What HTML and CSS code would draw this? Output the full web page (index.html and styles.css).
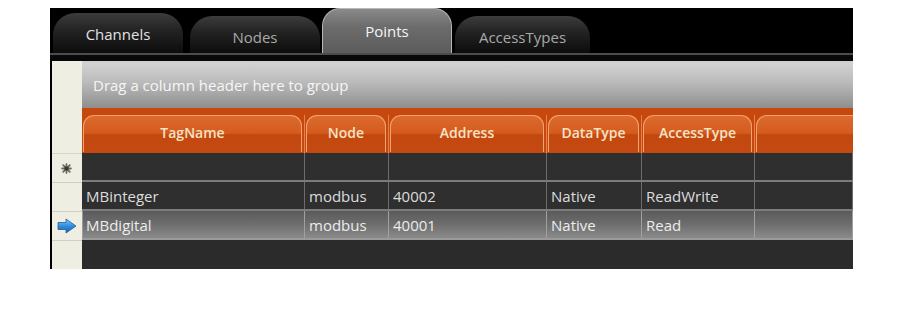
FILE: index.html
```html
<!DOCTYPE html>
<html>
<head>
<meta charset="utf-8">
<link rel="stylesheet" href="styles.css">
</head>
<body>
<div class="frame">
  <div class="tabstrip">
    <div class="tab tab-channels">Channels</div>
    <div class="tab tab-nodes dim">Nodes</div>
    <div class="tab tab-points active">Points</div>
    <div class="tab tab-access dim">AccessTypes</div>
  </div>
  <div class="sep"></div>
  <div class="main">
    <div class="indicator">
      <div class="ind-top"></div>
      <div class="ind-cell">
        <svg width="11" height="11" viewBox="0 0 10 10" class="star">
          <g stroke="#6a6a60" stroke-width="1.6" stroke-linecap="round">
            <line x1="5" y1="1" x2="5" y2="9"/>
            <line x1="1" y1="5" x2="9" y2="5"/>
            <line x1="2" y1="2" x2="8" y2="8"/>
            <line x1="8" y1="2" x2="2" y2="8"/>
          </g>
          <rect x="3.3" y="3.3" width="3.4" height="3.4" fill="#3a3a36"/>
        </svg>
      </div>
      <div class="ind-cell"></div>
      <div class="ind-cell">
        <svg width="20" height="16" viewBox="0 0 20 16" class="arrow">
          <defs>
            <linearGradient id="ag" x1="0" y1="0" x2="0" y2="1">
              <stop offset="0" stop-color="#86ccf6"/>
              <stop offset="0.5" stop-color="#2f8ede"/>
              <stop offset="1" stop-color="#1b5fa8"/>
            </linearGradient>
          </defs>
          <path d="M1 4.5 H9 V1 L19 8 L9 15 V11.5 H1 Z" fill="url(#ag)" stroke="#1d5d9e" stroke-width="0.8" stroke-linejoin="round"/>
        </svg>
      </div>
      <div class="ind-rest"></div>
    </div>
    <div class="grid">
      <div class="group">Drag a column header here to group</div>
      <div class="cols headers">
        <div class="hcell"><div class="hbtn">TagName</div></div>
        <div class="hcell"><div class="hbtn">Node</div></div>
        <div class="hcell"><div class="hbtn">Address</div></div>
        <div class="hcell"><div class="hbtn">DataType</div></div>
        <div class="hcell"><div class="hbtn">AccessType</div></div>
        <div class="hcell last"><div class="hbtn"></div></div>
      </div>
      <div class="cols row">
        <div class="cell"></div><div class="cell"></div><div class="cell"></div>
        <div class="cell"></div><div class="cell"></div><div class="cell"></div>
      </div>
      <div class="cols row">
        <div class="cell">MBinteger</div><div class="cell">modbus</div><div class="cell">40002</div>
        <div class="cell">Native</div><div class="cell">ReadWrite</div><div class="cell"></div>
      </div>
      <div class="cols row sel">
        <div class="cell">MBdigital</div><div class="cell">modbus</div><div class="cell">40001</div>
        <div class="cell">Native</div><div class="cell">Read</div><div class="cell"></div>
      </div>
      <div class="empty"></div>
    </div>
  </div>
</div>
</body>
</html>
```

FILE: styles.css
```css
html, body {
  margin: 0;
  padding: 0;
  background: #ffffff;
}

body {
  font-family: "Open Sans", "Noto Sans", "DejaVu Sans", sans-serif;
}

.frame {
  margin: 8px 0 0 50px;
  width: 803px;
  height: 261px;
  background: #000;
  display: flex;
  flex-direction: column;
  overflow: hidden;
}

.tabstrip {
  height: 45px;
  display: flex;
  align-items: flex-end;
  padding-left: 3px;
  background: #000;
}

.tab {
  display: flex;
  align-items: center;
  justify-content: center;
  font-size: 15px;
  color: #e2e2e2;
  border-radius: 22px 22px 0 0;
  background: linear-gradient(#3c3c3c 0%, #222 45%, #0c0c0c 100%);
  box-sizing: border-box;
  padding-top: 2px;
}

.tab.dim {
  color: #a9a9a9;
  padding-top: 4px;
}

.tab-channels { width: 130px; height: 40px; }
.tab-nodes { width: 130px; height: 37px; margin-left: 7px; }
.tab-points { width: 130px; height: 45px; margin-left: 2px; }
.tab-access { width: 135px; height: 37px; margin-left: 3px; }

.tab.active {
  background: linear-gradient(#8a8a8a 0%, #6c6c6c 40%, #5c5c5c 100%);
  border: 1px solid #b8b8b8;
  border-bottom: none;
  border-radius: 18px 18px 0 0;
  color: #f4f4f4;
  padding-top: 0;
  padding-bottom: 0;
}

.sep {
  height: 8px;
  border-top: 2px solid #4c4c4c;
  background: #080808;
  box-sizing: border-box;
}

.main {
  flex: 1;
  display: flex;
  padding-left: 2px;
}

.indicator {
  width: 30px;
  background: #efeee2;
  display: flex;
  flex-direction: column;
}

.ind-top {
  height: 92px;
  border-bottom: 1px solid #d6d5c8;
}

.ind-cell {
  height: 28px;
  border-bottom: 1px solid #cfcec2;
  display: flex;
  align-items: center;
  justify-content: center;
}

.ind-rest {
  flex: 1;
}

.star { margin-left: -2px; }
.arrow { margin-left: -1px; }

.grid {
  flex: 1;
  display: flex;
  flex-direction: column;
  background: #2b2b2b;
  overflow: hidden;
}

.group {
  height: 47px;
  box-sizing: border-box;
  border-top: 2px solid #cfcfcf;
  background: linear-gradient(#d3d3d3 0%, #b9b9b9 45%, #8e8e8e 100%);
  color: #f6f6f6;
  font-size: 15px;
  display: flex;
  align-items: center;
  padding-left: 11px;
  padding-bottom: 2px;
}

.cols {
  display: grid;
  grid-template-columns: 223px 84px 158px 95px 113px 1fr;
}

.headers {
  height: 45px;
  background: #c6480e;
  padding-top: 7px;
  box-sizing: border-box;
}

.hcell {
  padding: 0 2px 0 1px;
  border-right: 1px solid #e5814a;
}

.hcell.last {
  border-right: none;
  padding-right: 0;
  margin-right: -14px;
}

.hbtn {
  height: 37px;
  box-sizing: border-box;
  border: 1px solid #f2a470;
  border-bottom: none;
  border-radius: 11px 11px 0 0;
  background: linear-gradient(#dc6a2e 0%, #d45b1d 48%, #c24810 52%, #c44a12 100%);
  color: #f7e3c4;
  font-size: 14px;
  font-weight: 600;
  display: flex;
  align-items: center;
  justify-content: center;
  padding-bottom: 4px;
}

.row {
  height: 29px;
  box-sizing: border-box;
  border-bottom: 2px solid #7c7c7c;
  background: #2f2f30;
}

.cell {
  border-right: 1px solid #6c6c6c;
  color: #dcdcdc;
  font-size: 15px;
  display: flex;
  align-items: center;
  padding-left: 4px;
  white-space: nowrap;
}

.row.sel {
  background: linear-gradient(#5a5a5a 0%, #6e6e6e 50%, #8a8a8a 100%);
  border-bottom: 2px solid #9a9a9a;
}

.row.sel .cell {
  color: #ececec;
  border-right-color: #a0a0a0;
}

.row.sel .cell:first-child {
  border-left: 1px solid #9a9a9a;
  padding-left: 3px;
}

.empty {
  flex: 1;
  background: #2b2b2b;
}
```
